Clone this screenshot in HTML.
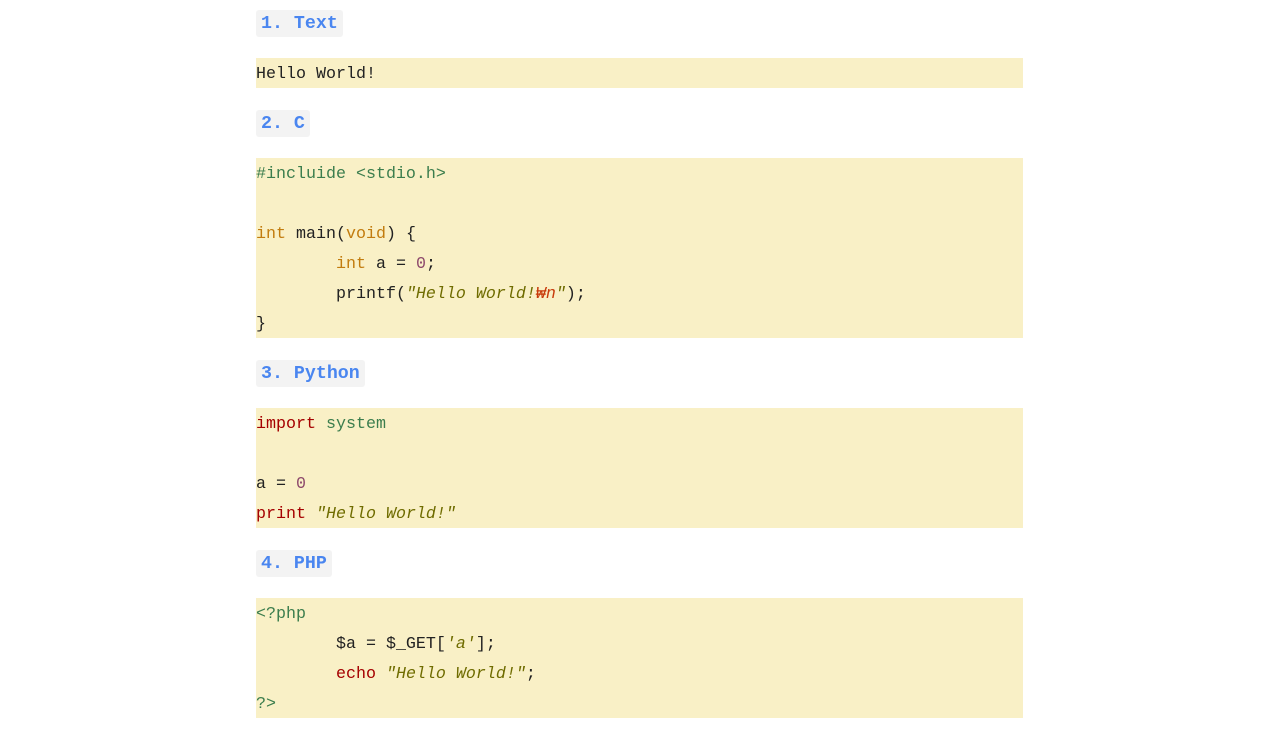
<!DOCTYPE html>
<html><head><meta charset="utf-8"><style>
body{margin:0;background:#fff;}
.h{position:absolute;left:256px;height:27px;line-height:27px;padding:4px 5px 0;box-sizing:border-box;background:#f3f3f3;border-radius:3px;font:bold 18.3px "Liberation Mono","DejaVu Sans Mono",monospace;color:#4a86f0;}
pre{position:absolute;left:256px;width:767px;margin:0;background:#f9f0c6;font:16.67px/30px "Liberation Mono","DejaVu Sans Mono",monospace;color:#222;tab-size:8;}
pre span.l{position:relative;top:2px;}
pre>div{position:relative;top:2px;height:30px;white-space:pre;}
.p{color:#3b7d4d}.k{color:#c27c0e}.n{color:#8e4a6c}.s{color:#6f6c00;font-style:italic}.e{color:#c83a0a}.r{color:#a50000}
</style></head><body>
<div class="h" style="top:10px">1. Text</div>
<pre style="top:58px"><div>Hello World!</div></pre>
<div class="h" style="top:110px">2. C</div>
<pre style="top:158px"><div><span class="p">#incluide &lt;stdio.h&gt;</span></div><div></div><div><span class="k">int</span> main(<span class="k">void</span>) {</div><div>	<span class="k">int</span> a = <span class="n">0</span>;</div><div>	printf(<span class="s">"Hello World!<span class="e">₩n</span>"</span>);</div><div>}</div></pre>
<div class="h" style="top:360px">3. Python</div>
<pre style="top:408px"><div><span class="r">import</span> <span class="p">system</span></div><div></div><div>a = <span class="n">0</span></div><div><span class="r">print</span> <span class="s">"Hello World!"</span></div></pre>
<div class="h" style="top:550px">4. PHP</div>
<pre style="top:598px"><div><span class="p">&lt;?php</span></div><div>	$a = $_GET[<span class="s">'a'</span>];</div><div>	<span class="r">echo</span> <span class="s">"Hello World!"</span>;</div><div><span class="p">?&gt;</span></div></pre>
</body></html>
